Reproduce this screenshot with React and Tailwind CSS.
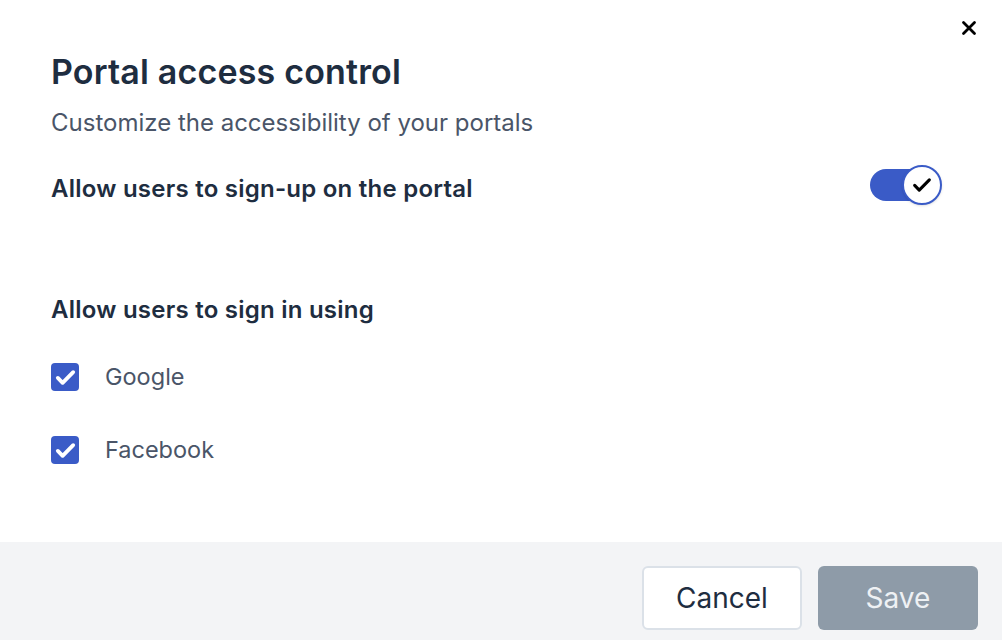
import { useState } from "react";

const CheckIcon = ({ className, strokeWidth = 3.4 }) => (
  <svg viewBox="0 0 24 24" fill="none" stroke="currentColor" strokeWidth={strokeWidth} strokeLinecap="round" strokeLinejoin="round" className={className}>
    <path d="M4 12.5l5 5L20 6.5" />
  </svg>
);

const Checkbox = ({ label }) => (
  <label className="flex items-center h-[28px]">
    <span className="w-[28px] h-[28px] rounded-[4px] bg-[#3a5bc7] flex items-center justify-center">
      <CheckIcon className="w-[23px] h-[23px] text-white" strokeWidth={4} />
    </span>
    <span className="ml-[26px] text-[23.5px] text-[#4a5568]">{label}</span>
  </label>
);

const App = () => {
  const [on] = useState(true);
  return (
    <div className="w-[1002px] h-[640px] bg-white flex flex-col relative" style={{ fontFamily: "Inter, 'Noto Sans', sans-serif" }}>
      <button className="absolute top-[19px] right-[24px] w-[18px] h-[18px] flex items-center justify-center text-black">
        <svg viewBox="0 0 16 16" className="w-[16px] h-[16px]" stroke="currentColor" strokeWidth="2.8" strokeLinecap="round">
          <path d="M2.5 2.5l11 11M13.5 2.5l-11 11" />
        </svg>
      </button>

      <div className="flex-1 px-[51px] pt-[52px]">
        <h1 className="text-[34px] leading-[40px] font-semibold tracking-[0.005em] text-[#1e2d40]">Portal access control</h1>
        <p className="mt-[16px] text-[24px] leading-[30px] text-[#4a5568]">Customize the accessibility of your portals</p>

        <div className="mt-[27px] flex items-start justify-between pr-[9px]">
          <span className="mt-[9px] text-[24px] leading-[30px] font-semibold tracking-[0.01em] text-[#1e2d40]">Allow users to sign-up on the portal</span>
          <div className="relative w-[72px] h-[40px] flex items-center">
            <div className="w-[62px] h-[32px] rounded-full bg-[#3a5bc7]" />
            {on && (
              <div className="absolute right-0 top-0 w-[40px] h-[40px] rounded-full bg-white border-2 border-[#3a5bc7] flex items-center justify-center shadow-sm">
                <CheckIcon className="w-[22px] h-[22px] text-black" strokeWidth={3.4} />
              </div>
            )}
          </div>
        </div>

        <div className="mt-[90px] text-[24px] leading-[30px] font-semibold tracking-[0.01em] text-[#1e2d40]">Allow users to sign in using</div>

        <div className="mt-[38px] flex flex-col gap-[45px]">
          <Checkbox label="Google" />
          <Checkbox label="Facebook" />
        </div>
      </div>

      <div className="h-[98px] bg-[#f3f4f6] flex items-center justify-end gap-[16px] pr-[24px] pt-[14px]">
        <button className="w-[160px] h-[64px] rounded-[6px] bg-white border-2 border-[#dbe1e8] text-[28px] text-[#1e2d40]">Cancel</button>
        <button className="w-[160px] h-[64px] rounded-[6px] bg-[#8e9ba8] text-[28px] text-[#eef1f4]">Save</button>
      </div>
    </div>
  );
};

export default App;
